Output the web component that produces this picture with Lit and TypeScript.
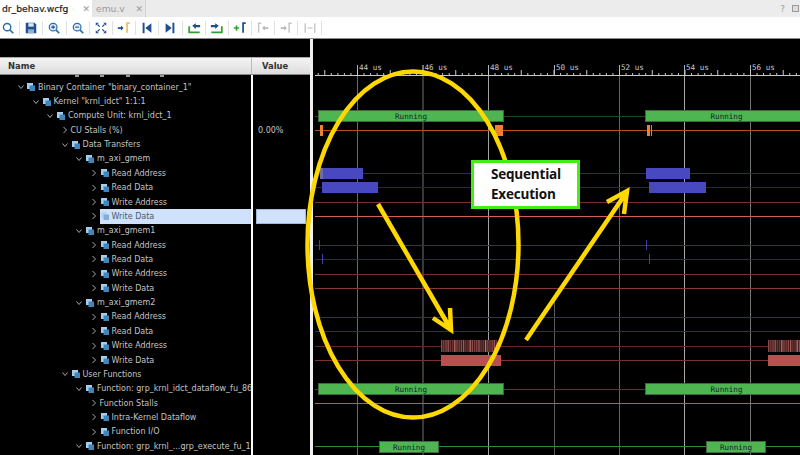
import { LitElement, css, html, svg } from "lit";
import { customElement } from "lit/decorators.js";

type Row = { label: string; level: number; arrow: "open" | "closed"; icon?: boolean; value?: string; selected?: boolean };

const leaf = (label: string, selected = false): Row => ({ label, level: 5, arrow: "closed", icon: true, selected });

const ROWS: Row[] = [
  { label: 'Binary Container "binary_container_1"', level: 0, arrow: "open", icon: true },
  { label: 'Kernel "krnl_idct" 1:1:1', level: 1, arrow: "open", icon: true },
  { label: "Compute Unit: krnl_idct_1", level: 2, arrow: "open", icon: true },
  { label: "CU Stalls (%)", level: 3, arrow: "closed", value: "0.00%" },
  { label: "Data Transfers", level: 3, arrow: "open", icon: true },
  { label: "m_axi_gmem", level: 4, arrow: "open", icon: true },
  leaf("Read Address"),
  leaf("Read Data"),
  leaf("Write Address"),
  leaf("Write Data", true),
  { label: "m_axi_gmem1", level: 4, arrow: "open", icon: true },
  leaf("Read Address"),
  leaf("Read Data"),
  leaf("Write Address"),
  leaf("Write Data"),
  { label: "m_axi_gmem2", level: 4, arrow: "open", icon: true },
  leaf("Read Address"),
  leaf("Read Data"),
  leaf("Write Address"),
  leaf("Write Data"),
  { label: "User Functions", level: 3, arrow: "open", icon: true },
  { label: "Function: grp_krnl_idct_dataflow_fu_86", level: 4, arrow: "open", icon: true },
  { label: "Function Stalls", level: 5, arrow: "closed" },
  leaf("Intra-Kernel Dataflow"),
  leaf("Function I/O"),
  { label: "Function: grp_krnl_...grp_execute_fu_1", level: 4, arrow: "open", icon: true },
];

// cut-off descenders of the row scrolled out above the list
const SPECKS = [75, 100, 126, 160];

// wave canvas starts at x = 313, y = 39 in page coordinates
const OX = 313;
const OY = 39;
const GRID = [
  { x: 357.5, label: "44 us", color: "#6a6a6a", from: 65 },
  { x: 423, label: "46 us", color: "#707070", from: 65 },
  { x: 488.5, label: "48 us", color: "#a0a0a0", from: 65 },
  { x: 554.5, label: "50 us", color: "#5c5c5c", from: 300 },
  { x: 619.5, label: "52 us", color: "#666", from: 65 },
  { x: 684.5, label: "54 us", color: "#a8a8a8", from: 65 },
  { x: 750.5, label: "56 us", color: "#747474", from: 65 },
];

const BLUE = "#30307a";
const RED = "#7a3030";
const TRACES = [
  { y: 116, color: "#1c4a20" },
  { y: 130, color: "#b8501c" },
  { y: 173, color: "#2a2a66" },
  { y: 187, color: "#24245c" },
  { y: 202, color: RED },
  { y: 216, color: "#d85c58" },
  { y: 245, color: BLUE },
  { y: 259, color: "#28286c" },
  { y: 274, color: RED },
  { y: 288, color: "#8a3834" },
  { y: 317, color: BLUE },
  { y: 331, color: "#2c2c70" },
  { y: 346, color: "#642828" },
  { y: 360, color: "#7a3030" },
  { y: 389, color: "#22562a" },
  { y: 403, color: "#b0682c" },
  { y: 446, color: "#2f8a38" },
];

const BARS = [
  { x: 320, y: 168, w: 43, h: 11, fill: "#4848c0" },
  { x: 320, y: 168, w: 3, h: 11, fill: "#6c6ca8" },
  { x: 322, y: 182, w: 56, h: 11, fill: "#4848c0" },
  { x: 646, y: 168, w: 44, h: 11, fill: "#4848c0" },
  { x: 649, y: 182, w: 57, h: 11, fill: "#4848c0" },
  { x: 319, y: 240, w: 1, h: 10, fill: "#4040b0" },
  { x: 322, y: 254, w: 1, h: 10, fill: "#4040b0" },
  { x: 646, y: 240, w: 1, h: 10, fill: "#4040b0" },
  { x: 649, y: 254, w: 1, h: 10, fill: "#4040b0" },
  { x: 320, y: 125, w: 3, h: 11, fill: "#f08030" },
  { x: 495, y: 125, w: 8, h: 11, fill: "#f08030" },
  { x: 647, y: 125, w: 3, h: 11, fill: "#f08030" },
  { x: 651, y: 125, w: 1, h: 11, fill: "#f08030" },
  { x: 441, y: 355, w: 60, h: 11, fill: "#b85050" },
  { x: 768, y: 355, w: 32, h: 11, fill: "#b85050" },
];

const RUNNING = [
  { x: 318, y: 110, w: 185, h: 11 },
  { x: 645, y: 110, w: 162, h: 11 },
  { x: 318, y: 383, w: 185, h: 11 },
  { x: 645, y: 383, w: 162, h: 11 },
  { x: 379, y: 441, w: 59, h: 11 },
  { x: 706, y: 441, w: 59, h: 11 },
];

const BURSTS = [
  [441, 497],
  [768, 800],
];
const BURST_SHADES = ["#8a4a4a", "#6a3434", "#a05a5a", "#7a4040", "#c07070", "#6a3434", "#8a4a4a"];

const range = (from: number, to: number, step: number) => {
  const out: number[] = [];
  for (let v = from; v < to; v += step) out.push(v);
  return out;
};

const TB_ICONS = [
  svg`<circle cx="7" cy="7" r="4.2" fill="none" stroke="#2a6ea8" stroke-width="1.6"/><path d="M10 10l4 4" stroke="#2a6ea8" stroke-width="2"/>`,
  svg`<path d="M2 2h10l2 2v10H2z" fill="#1f4f8c"/><rect x="5" y="2.5" width="6" height="4" fill="#dfe8f2"/><rect x="4.5" y="9.5" width="7" height="4.5" fill="#8fb0d2"/>`,
  svg`<circle cx="7" cy="7" r="4.4" fill="#dfecf7" stroke="#2a6ea8" stroke-width="1.4"/><path d="M4.8 7h4.4M7 4.8v4.4" stroke="#1f4f8c" stroke-width="1.2"/><path d="M10.2 10.2l3.8 3.8" stroke="#2a6ea8" stroke-width="2"/>`,
  svg`<circle cx="7" cy="7" r="4.4" fill="#dfecf7" stroke="#2a6ea8" stroke-width="1.4"/><path d="M4.8 7h4.4" stroke="#1f4f8c" stroke-width="1.2"/><path d="M10.2 10.2l3.8 3.8" stroke="#2a6ea8" stroke-width="2"/>`,
  svg`<path d="M2 2h3.500L2 5.500zM14 2v3.500L10.500 2zM2 14v-3.500L5.500 14zM14 14h-3.500L14 10.500z" fill="#1f4f8c"/><path d="M4 4l2.500 2.500M12 4L9.500 6.500M4 12l2.500-2.500M12 12L9.500 9.500" stroke="#1f4f8c" stroke-width="1.400"/>`,
  svg`<path d="M1 7h3.500V5l3 3-3 3V9H1z" fill="#1f4f8c"/><path d="M14.500 2.500h-3v11" fill="none" stroke="#e8c068" stroke-width="2"/>`,
  svg`<rect x="3" y="2" width="2.200" height="12" fill="#1f4f8c"/><path d="M13 2.500v11L6 8z" fill="#1f4f8c"/>`,
  svg`<rect x="10.800" y="2" width="2.200" height="12" fill="#1f4f8c"/><path d="M3 2.500v11L10 8z" fill="#1f4f8c"/>`,
  svg`<path d="M2.500 6v7h12" fill="none" stroke="#30a030" stroke-width="2"/><path d="M6 5.500L10 2.500v2h5v2.500h-5v2z" fill="#1f4f8c"/>`,
  svg`<path d="M13.500 6v7h-12" fill="none" stroke="#30a030" stroke-width="2"/><path d="M10 5.500L6 2.500v2H1v2.500h5v2z" fill="#1f4f8c"/>`,
  svg`<path d="M1 8h6M4 5v6" stroke="#30a030" stroke-width="1.800"/><path d="M14.500 2.500h-3v11" fill="none" stroke="#1f4f8c" stroke-width="2"/>`,
  svg`<path d="M6 2.500H3v11" fill="none" stroke="#c4c4c4" stroke-width="1.600"/><path d="M14 7h-4V5L7 8l3 3V9h4z" fill="#b8b8b8"/>`,
  svg`<path d="M14.500 2.500h-3v11" fill="none" stroke="#c4c4c4" stroke-width="1.600"/><path d="M2 7h4V5l3 3-3 3V9H2z" fill="#b8b8b8"/>`,
  svg`<path d="M2.500 2.500v11M13.500 2.500v11M5 8h6" fill="none" stroke="#bcbcbc" stroke-width="1.400"/>`,
];

@customElement("app-root")
export class AppRoot extends LitElement {
  static styles = css`
    :host {
      display: block;
      width: 800px;
      height: 455px;
      position: relative;
      overflow: hidden;
      background: #000;
      font-family: "DejaVu Sans", sans-serif;
    }
    .tabs {
      display: flex;
      height: 17px;
      background: #ececec;
      font-size: 9.2px;
    }
    .tab {
      display: flex;
      align-items: center;
      justify-content: space-between;
      padding: 0 2px 0 2px;
      box-sizing: border-box;
    }
    .tab.active {
      width: 92px;
      background: #fff;
      color: #222;
      -webkit-text-stroke: 0.2px #222;
    }
    .tab.other {
      width: 54px;
      padding-left: 4px;
      background: #e6e6e6;
      color: #999;
      border-right: 1px solid #d4d4d4;
    }
    .close {
      color: #999;
      font-size: 9px;
      -webkit-text-stroke: 0;
    }
    .win {
      margin-left: auto;
      display: flex;
      align-items: center;
      gap: 7px;
      padding-right: 1px;
      color: #999;
      font-size: 9px;
    }
    .win i {
      width: 5px;
      height: 5px;
      border: 1px solid #999;
      background: #ddd;
    }
    .toolbar {
      display: flex;
      align-items: center;
      height: 21px;
      background: #fff;
      margin-left: -3px;
      border-bottom: 1px solid #8c8c8c;
    }
    .tool {
      width: 23.2px;
      height: 14px;
      flex: none;
      box-sizing: border-box;
      display: flex;
      align-items: center;
      justify-content: center;
      border-right: 1px solid #e2e2e2;
    }
    .tool svg {
      width: 14px;
      height: 14px;
    }
    .main {
      display: flex;
      height: 416px;
    }
    .names {
      width: 251px;
      flex: none;
    }
    .values {
      width: 59px;
      flex: none;
    }
    .sash {
      width: 3px;
      flex: none;
      background: #f0f0f0;
    }
    .band {
      height: 18px;
    }
    .head {
      height: 18px;
      box-sizing: border-box;
      padding-left: 8px;
      display: flex;
      align-items: center;
      background: linear-gradient(#f4f4f4, #dcdcdc);
      border-top: 1px solid #aaa;
      border-bottom: 1px solid #888;
      font-size: 8.4px;
      font-weight: bold;
      color: #333;
    }
    .values .head {
      padding-left: 10px;
      border-left: 1px solid #bbb;
    }
    .values .list {
      border-left: 2px solid #fff;
      height: 100%;
      padding-top: 5px;
    }
    .specks {
      display: flex;
      height: 2px;
      margin-bottom: 3px;
      position: relative;
    }
    .specks i {
      position: absolute;
      top: 0;
      width: 4px;
      height: 1.500px;
      background: #999;
    }
    .row {
      height: 14.36px;
      display: flex;
      align-items: center;
      white-space: nowrap;
      overflow: hidden;
      font-size: 8px;
      color: #c4c4c4;
    }
    .arrow {
      width: 6px;
      height: 8px;
      flex: none;
      margin-right: 3px;
    }
    .ic {
      width: 8px;
      height: 8px;
      flex: none;
      margin: 0 3px 0 1px;
    }
    .row.top .ic {
      margin-left: 0;
    }
    .row.sel .label {
      color: #4a5a6a;
    }
    .row.sel .ic {
      opacity: 0.55;
    }
    .sel-fill {
      flex: 1;
      display: flex;
      align-items: center;
      height: 100%;
      background: #cfe1fb;
    }
    .val {
      padding-left: 5px;
    }
    .val.sel {
      margin: 0 4px 0 3px;
      background: #cfe1fb;
      border: 1px solid #9fb8dc;
      box-sizing: border-box;
    }
    .wave {
      flex: 1;
      position: relative;
    }
    .wave svg {
      position: absolute;
      left: 0;
      top: 0;
    }
    .wave text {
      font-family: "DejaVu Sans Mono", monospace;
      font-size: 7.6px;
    }
    .overlay {
      position: absolute;
      left: 0;
      top: 0;
      pointer-events: none;
    }
    .note {
      position: absolute;
      left: 471px;
      top: 160px;
      width: 109px;
      height: 49px;
      box-sizing: border-box;
      border: 3px solid #44ee11;
      background: #fff;
      color: #111;
      font-family: "Open Sans", sans-serif;
      font-weight: 700;
      font-size: 13.5px;
      line-height: 20px;
      padding: 1px 0 0 17px;
      letter-spacing: -0.2px;
    }
  `;

  renderRow(r: Row) {
    const indent = 18 + r.level * 14.5;
    const arrow = r.arrow === "open"
      ? html`<svg class="arrow" viewBox="0 0 6 8"><path d="M0.500 2.500L3 5.500 5.500 2.500" fill="none" stroke="#bbb" stroke-width="0.9"/></svg>`
      : html`<svg class="arrow" viewBox="0 0 6 8"><path d="M1.500 1L4.500 4 1.500 7" fill="none" stroke="#bbb" stroke-width="0.9"/></svg>`;
    const icon = html`<svg class="ic" viewBox="0 0 8 8"><rect x="0" y="0" width="6" height="6" fill="#a8cdea"/><rect x="2.500" y="2.500" width="5.500" height="5.500" fill="#3f86bd"/></svg>`;
    const body = html`${r.icon ? icon : ""}<span class="label">${r.label}</span>`;
    return html`<div class="row ${r.selected ? "sel" : ""} ${r.level === 0 ? "top" : ""}" style="padding-left:${indent}px">
      ${arrow}${r.selected ? html`<div class="sel-fill">${body}</div>` : body}
    </div>`;
  }

  renderWave() {
    const minor = range(318.2, 800, 6.55);
    return html`<svg width="487" height="416" viewBox="${OX} ${OY} 487 416">
      ${GRID.map((g) => svg`<line x1=${g.x} x2=${g.x} y1=${g.from} y2="455" stroke=${g.color} stroke-width="1"/>
        <line x1=${g.x} x2=${g.x} y1="65" y2="76" stroke="#b0b0b0" stroke-width="1"/>`)}
      ${TRACES.map((t) => svg`<line x1="315" x2="800" y1=${t.y + 0.5} y2=${t.y + 0.5} stroke=${t.color} stroke-width="1"/>`)}
      <line x1="315" x2="800" y1="75.500" y2="75.500" stroke="#c8c8c8" stroke-width="1"/>
      ${minor.map((x, i) => svg`<line x1=${x} x2=${x} y1=${(i + 4) % 5 === 0 ? 70 : 73} y2="76" stroke="#c8c8c8" stroke-width="1"/>`)}
      ${GRID.map((g) => svg`<text x=${g.x + 1.5} y="70" fill="#c8c8c8">${g.label}</text>`)}
      ${BARS.map((b) => svg`<rect x=${b.x} y=${b.y} width=${b.w} height=${b.h} fill=${b.fill}/>`)}
      ${BURSTS.map(([a, b]) => svg`<rect x=${a} y="340" width=${b - a} height="12" fill="#3c1c1c"/>
        ${range(a, b, 2.2).map((x, i) => svg`<rect x=${x} y="340" width="1.200" height="12" fill=${BURST_SHADES[(i * 3) % 7]}/>`)}`)}
      ${RUNNING.map((b) => svg`<rect x=${b.x + 0.5} y=${b.y + 0.5} width=${b.w} height=${b.h} fill="#4eb551" stroke="#3c6a3e"/>
        <text x=${b.x + b.w / 2 + 0.5} y=${b.y + b.h / 2 + 3} text-anchor="middle" fill="#123">Running</text>`)}
    </svg>`;
  }

  render() {
    return html`
      <div class="tabs">
        <div class="tab active"><span>dr_behav.wcfg</span><span class="close">✕</span></div>
        <div class="tab other"><span>emu.v</span><span class="close">✕</span></div>
        <div class="win"><span>?</span><i></i></div>
      </div>
      <div class="toolbar">
        ${TB_ICONS.map((ic) => html`<div class="tool"><svg viewBox="0 0 16 16">${ic}</svg></div>`)}
      </div>
      <div class="main">
        <div class="names">
          <div class="band"></div>
          <div class="head">Name</div>
          <div class="specks">${SPECKS.map((x) => html`<i style="left:${x}px"></i>`)}</div>
          <div>${ROWS.map((r) => this.renderRow(r))}</div>
        </div>
        <div class="values">
          <div class="band"></div>
          <div class="head">Value</div>
          <div class="list">
            ${ROWS.map((r) => html`<div class="row val ${r.selected ? "sel" : ""}">${r.value ?? ""}</div>`)}
          </div>
        </div>
        <div class="sash"></div>
        <div class="wave">${this.renderWave()}</div>
      </div>
      <svg class="overlay" width="800" height="455" fill="none" stroke="#ffd800" stroke-width="4.500">
        <ellipse cx="413" cy="244.500" rx="105.500" ry="173"/>
        <path d="M378 204L450 328M433 318L451 330 450 308"/>
        <path d="M526 340L626 193M607 202L627 191 624 214"/>
      </svg>
      <div class="note">Sequential<br />Execution</div>
    `;
  }
}
